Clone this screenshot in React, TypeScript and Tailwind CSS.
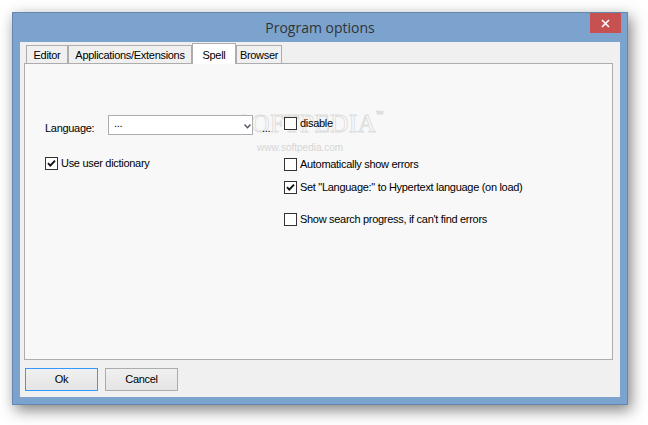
import React from "react";

const ui = { fontFamily: '"Liberation Sans", Arial, sans-serif' };

function CheckBox({ checked }: { checked?: boolean }) {
  return (
    <span className="w-[13px] h-[13px] shrink-0 border border-[#333333] bg-white flex items-center justify-center">
      {checked && (
        <svg width="11" height="11" viewBox="0 0 11 11">
          <path d="M2 5.2 L4.3 7.6 L9 2.6" fill="none" stroke="#111" strokeWidth="1.9" />
        </svg>
      )}
    </span>
  );
}

function Option({ label, checked }: { label: string; checked?: boolean }) {
  return (
    <div className="flex items-center gap-[3px] h-[13px]">
      <CheckBox checked={checked} />
      <span className="leading-none">{label}</span>
    </div>
  );
}

function Tab({ label, width, active }: { label: string; width: string; active?: boolean }) {
  if (active) {
    return (
      <div
        className={`${width} h-[21px] -mb-px relative z-10 bg-white border border-b-0 border-[#adadad] flex justify-center pt-[3px]`}
      >
        {label}
      </div>
    );
  }
  return (
    <div
      className={`${width} h-[18px] bg-[#f0f0f0] border border-b-0 border-[#adadad] flex items-center justify-center pt-[2px]`}
    >
      {label}
    </div>
  );
}

export default function App() {
  return (
    <div className="w-[648px] h-[425px] bg-white overflow-hidden pt-[12px] pl-[12px]">
      <div className="w-[616px] h-[393px] bg-[#7ba3cd] border border-[#6487ae] shadow-[3px_5px_14px_rgba(0,0,0,0.5)] flex flex-col">
        {/* title bar */}
        <div className="h-[29px] relative flex items-center justify-center">
          <span
            className="text-[14px] text-[#333333] leading-none pt-[1px]"
            style={{ fontFamily: '"Open Sans", "Noto Sans", sans-serif' }}
          >
            Program options
          </span>
          <div className="absolute right-[6px] top-0 w-[31px] h-[20px] bg-[#c75050] flex items-center justify-center">
            <svg width="9" height="9" viewBox="0 0 9 9">
              <path d="M1 1 L8 8 M8 1 L1 8" stroke="#fff" strokeWidth="1.6" />
            </svg>
          </div>
        </div>

        {/* client */}
        <div
          className="ml-[7px] w-[600px] h-[355px] bg-[#f0f0f0] flex flex-col text-[11px] tracking-[-0.3px] text-black"
          style={ui}
        >
          <div className="h-[21px] pt-[1px] pl-[6px] flex items-end">
            <Tab label="Editor" width="w-[42px]" />
            <Tab label="Applications/Extensions" width="w-[124px]" />
            <Tab label="Spell" width="w-[44px]" active />
            <Tab label="Browser" width="w-[46px]" />
          </div>

          <div className="ml-[4px] w-[589px] h-[297px] border border-[#adadad] bg-[#f8f8f8] relative flex">
            {/* watermark */}
            <div className="absolute left-[212px] top-[47px] pointer-events-none select-none">
              <div
                className="text-[25px] leading-none tracking-[0.5px] text-white"
                style={{ fontFamily: '"Liberation Serif", serif', WebkitTextStroke: "1px #dedede" }}
              >
                SOFTPEDIA<span className="text-[7px] align-top text-[#dddddd]">™</span>
              </div>
              <div className="text-[10px] tracking-[0px] text-[#d6d6d6] ml-[20px] mt-[4px]">www.softpedia.com</div>
            </div>

            {/* left column */}
            <div className="w-[259px] pl-[20px] pt-[51px] flex flex-col relative">
              <div className="flex items-center h-[20px]">
                <span className="w-[63px] pt-[6px]">Language:</span>
                <div className="w-[145px] h-[20px] border border-[#abadb3] bg-white flex items-center justify-between pl-[5px] pr-[1px]">
                  <span className="leading-none -mt-[4px]">...</span>
                  <svg width="7" height="5" viewBox="0 0 7 5" className="mt-[2px]">
                    <path d="M0.5 0.5 L3.5 3.8 L6.5 0.5" fill="none" stroke="#555" strokeWidth="1.4" />
                  </svg>
                </div>
                <span className="ml-[9px] pt-[6px]">...</span>
              </div>
              <div className="mt-[22px]">
                <Option label="Use user dictionary" checked />
              </div>
            </div>

            {/* right column */}
            <div className="pt-[53px] flex flex-col relative">
              <Option label="disable" />
              <div className="mt-[28px]">
                <Option label="Automatically show errors" />
              </div>
              <div className="mt-[10px]">
                <Option label={'Set "Language:" to Hypertext language (on load)'} checked />
              </div>
              <div className="mt-[19px]">
                <Option label="Show search progress, if can't find errors" />
              </div>
            </div>
          </div>

          <div className="mt-[8px] ml-[5px] flex gap-[7px]">
            <button className="w-[73px] h-[23px] border border-[#3399ff] bg-gradient-to-b from-[#f0f0f0] to-[#e5e5e5] tracking-[-0.3px]">
              Ok
            </button>
            <button className="w-[73px] h-[23px] border border-[#acacac] bg-gradient-to-b from-[#f0f0f0] to-[#e5e5e5] tracking-[-0.3px]">
              Cancel
            </button>
          </div>
        </div>
      </div>
    </div>
  );
}
